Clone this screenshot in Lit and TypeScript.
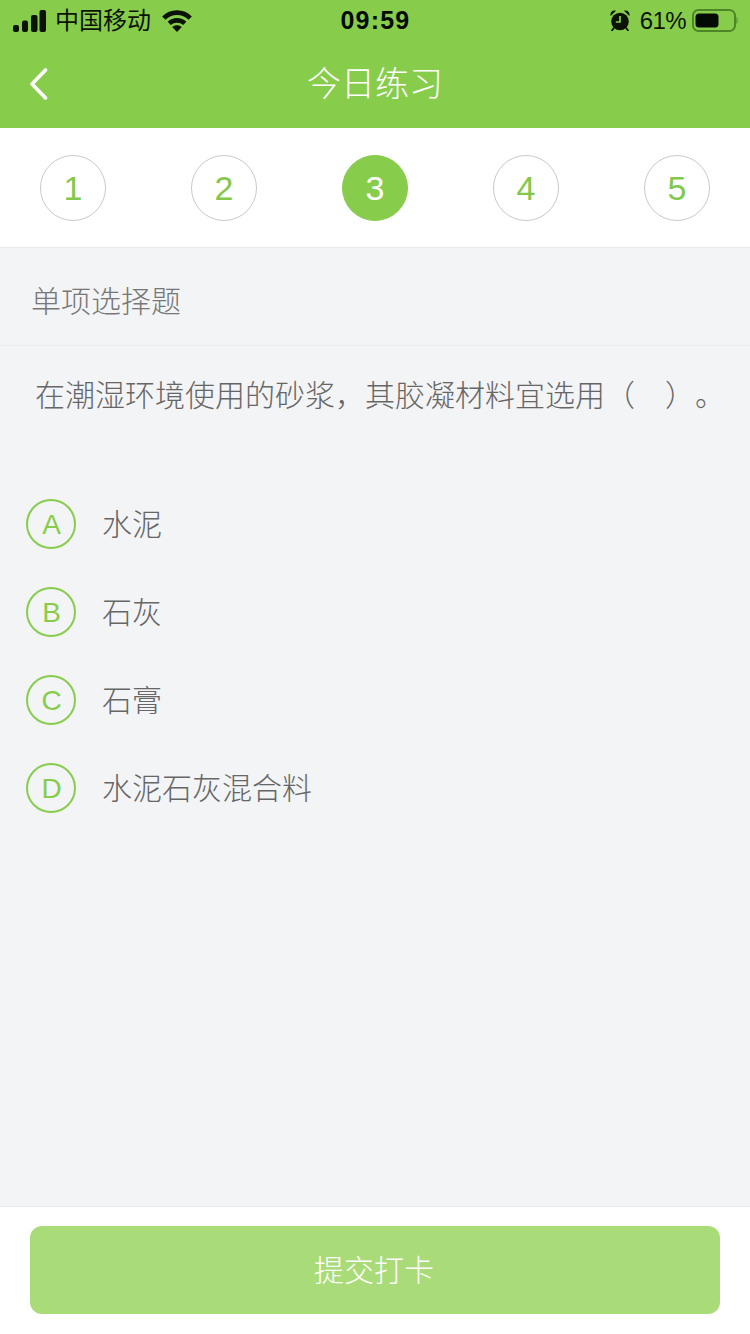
import { LitElement, html, css } from "lit";
import { customElement, state } from "lit/decorators.js";
import { classMap } from "lit/directives/class-map.js";

@customElement("app-root")
export class AppRoot extends LitElement {
  @state() steps = [1, 2, 3, 4, 5];
  @state() current = 3;
  @state() options = [
    { key: "A", text: "水泥" },
    { key: "B", text: "石灰" },
    { key: "C", text: "石膏" },
    { key: "D", text: "水泥石灰混合料" },
  ];

  static styles = css`
    :host {
      display: flex;
      flex-direction: column;
      width: 750px;
      height: 1334px;
      background: #f3f4f6;
      font-family: "Liberation Sans", "Noto Sans CJK SC", sans-serif;
      overflow: hidden;
    }

    .head {
      background: #87cd4b;
      height: 128px;
      flex-shrink: 0;
    }

    .status {
      height: 40px;
      box-sizing: border-box;
      display: grid;
      grid-template-columns: 1fr auto 1fr;
      align-items: center;
      padding: 1px 12px 0 13px;
      color: #0b1404;
      font-size: 24px;
    }
    .status-left,
    .status-right {
      display: flex;
      align-items: center;
    }
    .status-right {
      justify-content: flex-end;
    }
    .carrier {
      margin: 0 11px 0 9px;
      line-height: 38px;
    }
    .time {
      font-weight: 700;
      font-size: 25px;
      letter-spacing: 1.2px;
      color: #050a02;
    }
    .percent {
      margin: 0 6px 0 10px;
      font-size: 24px;
      letter-spacing: -0.6px;
    }
    svg {
      display: block;
      flex-shrink: 0;
    }

    .nav {
      height: 88px;
      display: grid;
      grid-template-columns: 1fr auto 1fr;
      align-items: center;
      padding: 0 30px;
      box-sizing: border-box;
    }
    .title {
      color: #fff;
      font-size: 34px;
      font-weight: 300;
      line-height: 88px;
    }

    .steps {
      height: 120px;
      box-sizing: border-box;
      flex-shrink: 0;
      background: #fff;
      border-bottom: 1px solid #e8e9ea;
      display: flex;
      justify-content: space-between;
      align-items: flex-start;
      padding: 27px 40px 0;
    }
    .step {
      width: 66px;
      height: 66px;
      box-sizing: border-box;
      border-radius: 50%;
      border: 1px solid #c9c9c9;
      color: #82c84a;
      font-size: 34px;
      padding-top: 1px;
      display: flex;
      align-items: center;
      justify-content: center;
    }
    .step.active {
      background: #87cd4b;
      border-color: #87cd4b;
      color: #fff;
    }

    .type {
      height: 98px;
      flex-shrink: 0;
      box-sizing: border-box;
      border-bottom: 1px solid #e9eaec;
      display: flex;
      align-items: center;
      padding: 4px 0 0 31px;
      font-size: 30px;
      font-weight: 300;
      color: #777;
    }

    .question {
      padding: 27px 0 0 35px;
      font-size: 30px;
      line-height: 46px;
      font-weight: 300;
      color: #666;
      white-space: nowrap;
      text-spacing-trim: space-all;
    }

    .options {
      flex: 1;
      padding: 80px 0 0 26px;
      display: flex;
      flex-direction: column;
      gap: 38px;
    }
    .option {
      display: flex;
      align-items: center;
      gap: 26px;
      height: 50px;
    }
    .letter {
      width: 50px;
      height: 50px;
      box-sizing: border-box;
      border: 2px solid #87cd4b;
      border-radius: 50%;
      color: #87cd4b;
      font-size: 28px;
      padding: 2px 0 0 1px;
      display: flex;
      align-items: center;
      justify-content: center;
    }
    .text {
      font-size: 30px;
      font-weight: 300;
      color: #666;
      padding-bottom: 5px;
    }

    .foot {
      height: 128px;
      flex-shrink: 0;
      box-sizing: border-box;
      background: #fff;
      border-top: 1px solid #e8e9ea;
      padding: 19px 30px 20px;
    }
    .submit {
      height: 88px;
      box-sizing: border-box;
      padding: 0 2px 4px 0;
      border-radius: 12px;
      background: #a9dc78;
      color: #fff;
      font-size: 30px;
      font-weight: 300;
      display: flex;
      align-items: center;
      justify-content: center;
    }
  `;

  render() {
    return html`
      <div class="head">
        <div class="status">
          <div class="status-left">
            ${this._signal()}
            <span class="carrier">中国移动</span>
            ${this._wifi()}
          </div>
          <div class="time">09:59</div>
          <div class="status-right">
            ${this._alarm()}
            <span class="percent">61%</span>
            ${this._battery()}
          </div>
        </div>
        <div class="nav">
          <svg width="18" height="32" viewBox="0 0 18 32" fill="none"
            stroke="#fff" stroke-width="3.6" stroke-linecap="round" stroke-linejoin="round">
            <path d="M15.5 2 L2 16 L15.5 30"></path>
          </svg>
          <div class="title">今日练习</div>
          <span></span>
        </div>
      </div>

      <div class="steps">
        ${this.steps.map(
          (n) => html`<div class=${classMap({ step: true, active: n === this.current })}>${n}</div>`
        )}
      </div>

      <div class="type">单项选择题</div>
      <div class="question">在潮湿环境使用的砂浆，其胶凝材料宜选用（　）。</div>

      <div class="options">
        ${this.options.map(
          (o) => html`
            <div class="option">
              <div class="letter">${o.key}</div>
              <div class="text">${o.text}</div>
            </div>
          `
        )}
      </div>

      <div class="foot">
        <div class="submit">提交打卡</div>
      </div>
    `;
  }

  _signal() {
    return html`<svg width="33" height="22" viewBox="0 0 33 22" fill="#0b1404">
      <rect x="0" y="15" width="6" height="7" rx="2"></rect>
      <rect x="9" y="10.5" width="6" height="11.5" rx="2"></rect>
      <rect x="18" y="5" width="6.5" height="17" rx="2"></rect>
      <rect x="26.5" y="0" width="6.5" height="22" rx="2"></rect>
    </svg>`;
  }

  _wifi() {
    return html`<svg width="30" height="22" viewBox="0 0 30 22" fill="none" stroke="#0b1404" stroke-width="4.6">
      <path d="M1.8 8.2 C9 0.8 21 0.8 28.2 8.2"></path>
      <path d="M7.2 13.4 C11.5 9.4 18.5 9.4 22.8 13.4"></path>
      <path d="M15 22 L10.2 17 C13 14.8 17 14.8 19.8 17 Z" fill="#0b1404" stroke="none"></path>
    </svg>`;
  }

  _alarm() {
    return html`<svg width="20" height="21" viewBox="0 0 20 21">
      <circle cx="10" cy="11.5" r="8.8" fill="#0b1404"></circle>
      <path d="M0.6 6 C-0.2 2.4 2.4 -0.2 6 0.8 Z M19.4 6 C20.2 2.4 17.6 -0.2 14 0.8 Z" fill="#0b1404"></path>
      <path d="M3.8 18 L2 20.5 M16.2 18 L18 20.5" stroke="#0b1404" stroke-width="1.8" stroke-linecap="round"></path>
      <path d="M10 6 V12 H5.8" fill="none" stroke="#87cd4b" stroke-width="1.7"></path>
    </svg>`;
  }

  _battery() {
    return html`<svg width="46" height="23" viewBox="0 0 46 23">
      <rect x="1" y="1" width="42" height="21" rx="5.5" fill="none" stroke="#4d8528" stroke-width="2"></rect>
      <rect x="3.5" y="4.5" width="23" height="14" rx="3.5" fill="#050a02"></rect>
      <path d="M44.5 8 C46 9 46 14 44.5 15 Z" fill="#4d8528"></path>
    </svg>`;
  }
}
